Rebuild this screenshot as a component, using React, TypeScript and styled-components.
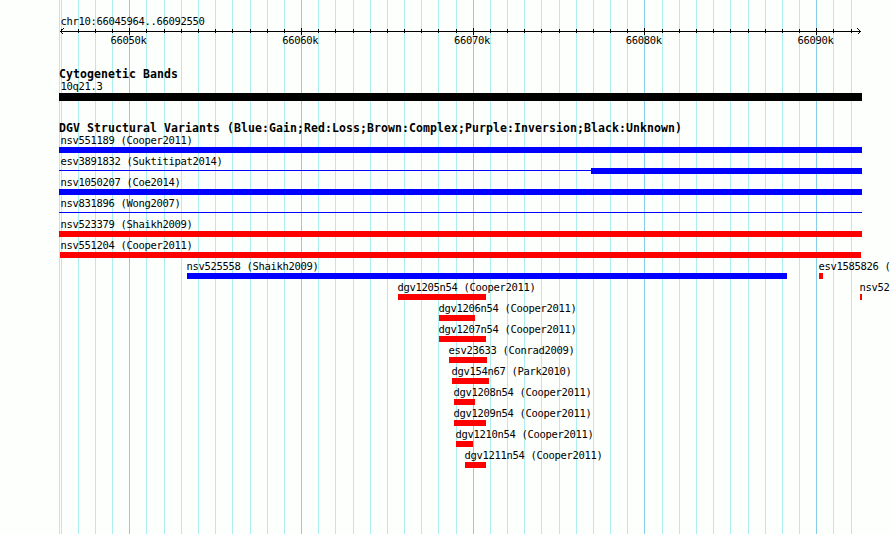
import styled, { createGlobalStyle } from "styled-components";

const REGION_START = 66045964;
const REGION_END = 66092550;
const PANEL_LEFT = 59;
const PANEL_WIDTH = 803;

const GlobalStyle = createGlobalStyle`
  * {
    box-sizing: border-box;
  }

  body {
    margin: 0;
    background-color: #fdfffc;
    overflow: hidden;
  }
`;

const Browser = styled.main`
  position: relative;
  width: 890px;
  height: 534px;
  padding-left: ${PANEL_LEFT}px;
  overflow: hidden;
  color: #000;
  font-family: "DejaVu Sans Mono", "Liberation Mono", monospace;
  font-size: 10.5px;
  letter-spacing: -0.321px;
  line-height: 13px;
  white-space: pre;
`;

const Gridlines = styled.svg`
  position: absolute;
  inset: 0;
  shape-rendering: crispEdges;
`;

const Panel = styled.div`
  position: relative;
  display: flex;
  flex-direction: column;
`;

const Position = styled.div`
  height: 28px;
  padding: 15px 0 0 1.4px;
`;

const Ruler = styled.svg`
  display: block;
  height: 7px;
  overflow: visible;
  shape-rendering: crispEdges;
`;

const Scale = styled.div`
  display: flex;
  gap: 135.75px;
  height: 33px;
  margin-top: -1px;
  margin-bottom: 1px;
  padding-left: 51.4px;

  span {
    width: 36px;
  }
`;

const TrackTitle = styled.h2`
  height: 12px;
  margin: 0;
  font-size: 11.5px;
  font-weight: 700;
  letter-spacing: 0.077px;
  line-height: 13px;
`;

const BandTrack = styled.section`
  height: 54px;
`;

const Band = styled.div`
  width: ${PANEL_WIDTH}px;
  height: 8px;
  background-color: #000;
`;

const BandLabel = styled.div`
  height: 13px;
  padding-left: 1.4px;
`;

const VariantTrack = styled.section`
  display: flex;
  flex-direction: column;
`;

const Row = styled.div`
  display: flex;
  height: 21px;
`;

const Feature = styled.div`
  flex: none;
`;

const FeatureLabel = styled.div<{ $inset: number }>`
  height: 13px;
  margin-left: ${(props) => props.$inset}px;
`;

const Glyph = styled.div`
  display: flex;
  height: 6px;
`;

const Thick = styled.div<{ $color: string }>`
  flex: 1;
  background-color: ${(props) => props.$color};
`;

const Thin = styled.div<{ $color: string }>`
  height: 1px;
  margin-top: 2px;
  background-color: ${(props) => props.$color};
`;

const GAIN = "#0000ff";
const LOSS = "#ff0000";

type Variant = {
  name: string;
  start: number;
  end: number;
  color: string;
  thin?: number;
};

const rows: Variant[][] = [
  [{ name: "nsv551189 (Cooper2011)", start: 59, end: 862, color: GAIN }],
  [{ name: "esv3891832 (Suktitipat2014)", start: 59, end: 862, color: GAIN, thin: 532 }],
  [{ name: "nsv1050207 (Coe2014)", start: 59, end: 862, color: GAIN }],
  [{ name: "nsv831896 (Wong2007)", start: 59, end: 862, color: GAIN, thin: 803 }],
  [{ name: "nsv523379 (Shaikh2009)", start: 59, end: 862, color: LOSS }],
  [{ name: "nsv551204 (Cooper2011)", start: 60, end: 861, color: LOSS }],
  [
    { name: "nsv525558 (Shaikh2009)", start: 187, end: 787, color: GAIN },
    { name: "esv1585826 (", start: 819, end: 823, color: LOSS },
  ],
  [
    { name: "dgv1205n54 (Cooper2011)", start: 398, end: 486, color: LOSS },
    { name: "nsv52", start: 860, end: 862, color: LOSS },
  ],
  [{ name: "dgv1206n54 (Cooper2011)", start: 439, end: 475, color: LOSS }],
  [{ name: "dgv1207n54 (Cooper2011)", start: 439, end: 486, color: LOSS }],
  [{ name: "esv23633 (Conrad2009)", start: 449, end: 487, color: LOSS }],
  [{ name: "dgv154n67 (Park2010)", start: 452, end: 489, color: LOSS }],
  [{ name: "dgv1208n54 (Cooper2011)", start: 454, end: 475, color: LOSS }],
  [{ name: "dgv1209n54 (Cooper2011)", start: 454, end: 486, color: LOSS }],
  [{ name: "dgv1210n54 (Cooper2011)", start: 456, end: 473, color: LOSS }],
  [{ name: "dgv1211n54 (Cooper2011)", start: 465, end: 486, color: LOSS }],
];

// labels never start left of the panel's first column
const labelInset = (start: number) => Math.max(start - 0.6, 60.4) - start;

const ticks = Array.from({ length: 47 }, (_, i) => {
  const kb = 66046 + i;
  const offset = ((kb * 1000 - REGION_START) * 800) / (REGION_END - REGION_START + 1);
  return { kb, x: Math.round(60 + offset), major: kb % 10 === 0 };
});

export default function App() {
  return (
    <>
      <GlobalStyle />
      <Browser>
        <Gridlines width={890} height={534}>
          <rect x={PANEL_LEFT} width={1} height={534} fill="#afeeee" />
          {ticks.map(({ kb, x, major }) => (
            <rect key={kb} x={x} width={1} height={534} fill={major ? "#87ceeb" : "#afeeee"} />
          ))}
        </Gridlines>
        <Panel>
          <Position>
            chr10:{REGION_START}..{REGION_END}
          </Position>
          <Ruler width={PANEL_WIDTH} viewBox={`${PANEL_LEFT} 28 ${PANEL_WIDTH} 7`}>
            <rect x={60} y={31} width={801} height={1} />
            {ticks.map(({ kb, x, major }) => (
              <rect key={kb} x={x} y={major ? 28 : 29} width={1} height={major ? 7 : 4} />
            ))}
            <path d="M63.5 28.5L60.5 31.5L63.5 34.5M857.5 28.5L860.5 31.5L857.5 34.5" fill="none" stroke="#000" />
          </Ruler>
          <Scale>
            {ticks
              .filter((tick) => tick.major)
              .map(({ kb }) => (
                <span key={kb}>{kb}k</span>
              ))}
          </Scale>
          <BandTrack>
            <TrackTitle>Cytogenetic Bands</TrackTitle>
            <BandLabel>10q21.3</BandLabel>
            <Band />
          </BandTrack>
          <VariantTrack>
            <TrackTitle>DGV Structural Variants (Blue:Gain;Red:Loss;Brown:Complex;Purple:Inversion;Black:Unknown)</TrackTitle>
            {rows.map((row, i) => (
              <Row key={i}>
                {row.map(({ name, start, end, color, thin = 0 }, j) => (
                  <Feature
                    key={name}
                    style={{ marginLeft: start - (j ? row[j - 1].end : PANEL_LEFT), width: end - start }}
                  >
                    <FeatureLabel $inset={labelInset(start)}>{name}</FeatureLabel>
                    <Glyph>
                      <Thin $color={color} style={{ width: thin }} />
                      {thin < end - start && <Thick $color={color} />}
                    </Glyph>
                  </Feature>
                ))}
              </Row>
            ))}
          </VariantTrack>
        </Panel>
      </Browser>
    </>
  );
}
